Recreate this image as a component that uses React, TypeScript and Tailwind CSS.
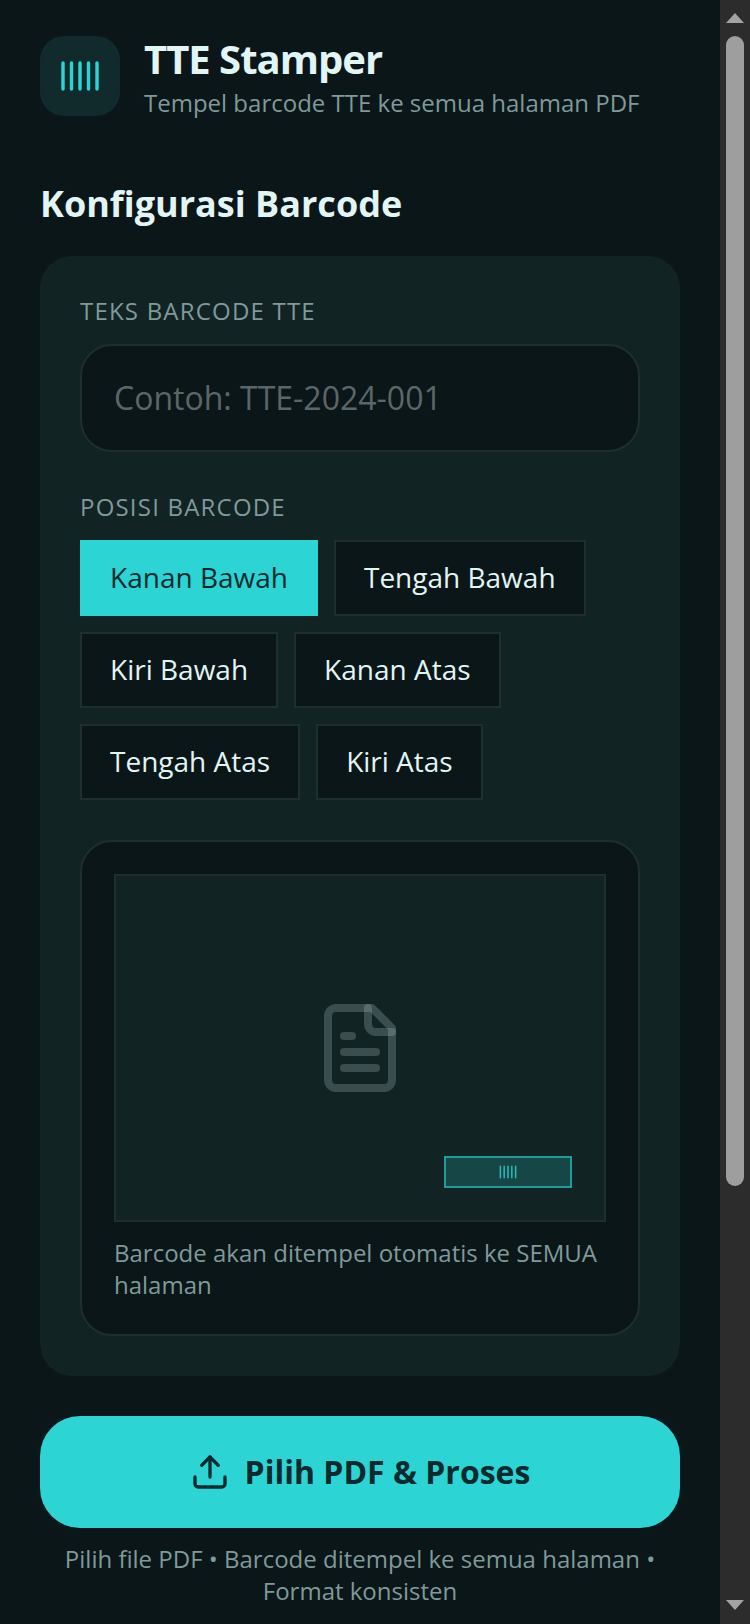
import { useState } from 'react';
import { Upload } from 'lucide-react';

const positions = ['Kanan Bawah', 'Tengah Bawah', 'Kiri Bawah', 'Kanan Atas', 'Tengah Atas', 'Kiri Atas'];

function BarcodeIcon({ size, className }: { size: number; className: string }) {
    return (
        <svg width={size} height={size} viewBox="0 0 40 40" fill="none" stroke="currentColor" strokeWidth="3.4" strokeLinecap="round" className={className}>
            <path d="M3 7v26M11.5 7v26M20 7v26M28.5 7v26M37 7v26" />
        </svg>
    );
}

function DocIcon() {
    return (
        <svg width="96" height="96" viewBox="0 0 24 24" fill="none" stroke="currentColor" strokeWidth="2" strokeLinecap="round" strokeLinejoin="round" className="text-[#9db4b4]/30">
            <path d="M15 2H6a2 2 0 0 0-2 2v16a2 2 0 0 0 2 2h12a2 2 0 0 0 2-2V7Z" />
            <path d="M14 2v4a2 2 0 0 0 2 2h4" />
            <path d="M10 9H8" />
            <path d="M16 13H8" />
            <path d="M16 17H8" />
        </svg>
    );
}

function Scrollbar() {
    return (
        <div className="w-[30px] shrink-0 h-full bg-[#2c2c2c] flex flex-col items-center pt-[13px] pb-[14px]">
            <svg width="18" height="10" viewBox="0 0 18 10" className="fill-[#a3a3a3] shrink-0">
                <path d="M9 0 18 10H0Z" />
            </svg>
            <div className="mt-[13px] w-[18px] h-[1150px] rounded-full bg-[#9e9e9e]" />
            <svg width="18" height="10" viewBox="0 0 18 10" className="fill-[#a3a3a3] shrink-0 mt-auto">
                <path d="M0 0H18L9 10Z" />
            </svg>
        </div>
    );
}

export default function App() {
    const [pos, setPos] = useState('Kanan Bawah');

    return (
        <div className="h-[1624px] w-[750px] flex overflow-hidden bg-[#0b1618] font-['Open_Sans',sans-serif] text-[#e2f5f5]">
            <main className="w-[720px] shrink-0 px-[40px] pt-[36px]">
                <header className="flex items-start gap-[24px]">
                    <div className="w-[80px] h-[80px] rounded-[24px] bg-[#112b2d] flex items-center justify-center">
                        <BarcodeIcon size={40} className="text-[#2dd4d4]" />
                    </div>
                    <div>
                        <h1 className="text-[40px] leading-[46px] font-bold tracking-[-1px]">TTE Stamper</h1>
                        <p className="mt-[5px] text-[24px] leading-[32px] text-[#7f9a9a]">Tempel barcode TTE ke semua halaman PDF</p>
                    </div>
                </header>

                <h2 className="mt-[61px] text-[36px] leading-[48px] font-bold">Konfigurasi Barcode</h2>

                <section className="mt-[28px] rounded-[32px] bg-[#122324] p-[40px]">
                    <label className="block text-[24px] leading-[30px] tracking-[1.2px] uppercase text-[#7f9a9a]">Teks Barcode TTE</label>
                    <input
                        placeholder="Contoh: TTE-2024-001"
                        className="mt-[18px] block w-full h-[108px] rounded-[32px] border-2 border-[#1d2f31] bg-[#0b1618] px-[32px] pb-[2px] text-[32px] outline-none placeholder:text-[#5c6667]"
                    />

                    <label className="mt-[40px] block text-[24px] leading-[30px] tracking-[1.2px] uppercase text-[#7f9a9a]">Posisi Barcode</label>
                    <div className="mt-[18px] flex flex-wrap gap-[16px]">
                        {positions.map((p) => (
                            <button
                                key={p}
                                onClick={() => setPos(p)}
                                className={`h-[76px] px-[28px] pb-[2px] border-2 text-[28px] ${
                                    pos === p ? 'bg-[#2dd4d4] border-[#2dd4d4] text-[#0a2a2e]' : 'bg-[#0b1618] border-[#1d2f31] text-[#e2f5f5]'
                                }`}
                            >
                                {p}
                            </button>
                        ))}
                    </div>

                    <div className="mt-[40px] rounded-[32px] border-2 border-[#1d2f31] bg-[#0b1618] p-[32px]">
                        <div className="relative h-[348px] border-2 border-[#1d2f31] bg-[#122324] flex items-center justify-center">
                            <DocIcon />
                            <div className="absolute right-[32px] bottom-[32px] w-[128px] h-[32px] border-2 border-[#2dd4d4]/60 bg-[#2dd4d4]/20 flex items-center justify-center">
                                <BarcodeIcon size={18} className="text-[#2dd4d4]/80" />
                            </div>
                        </div>
                        <p className="mt-[15px] mb-[1px] text-[24px] leading-[32px] text-[#7f9a9a]">Barcode akan ditempel otomatis ke SEMUA halaman</p>
                    </div>
                </section>

                <button className="mt-[40px] w-full h-[112px] rounded-[40px] bg-[#2dd4d4] text-[#0a2a2e] flex items-center justify-center gap-[15px] text-[32px] font-bold">
                    <Upload size={40} strokeWidth={2} />
                    Pilih PDF &amp; Proses
                </button>

                <p className="mt-[15px] text-center text-[24px] leading-[32px] text-[#7f9a9a]">Pilih file PDF • Barcode ditempel ke semua halaman • Format konsisten</p>
            </main>
            <Scrollbar />
        </div>
    );
}
